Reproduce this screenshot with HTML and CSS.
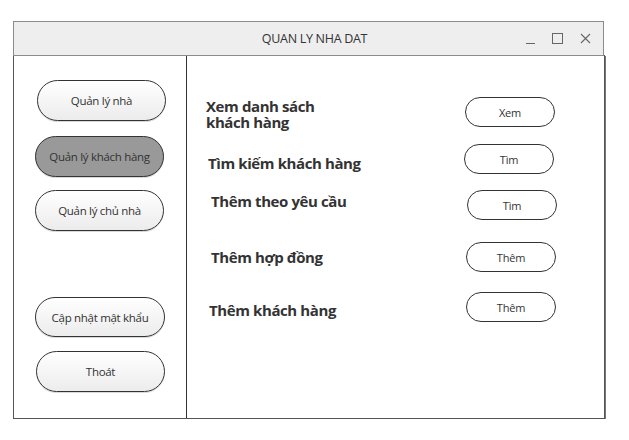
FILE: index.html
```html
<!DOCTYPE html>
<html>
<head>
<meta charset="utf-8">
<link rel="stylesheet" href="styles.css">
</head>
<body>
<div class="window">
  <div class="titlebar">
    <div class="title">QUAN LY NHA DAT</div>
    <div class="controls">
      <span class="ctl ctl-min"></span>
      <span class="ctl ctl-max"></span>
      <svg class="ctl-close" width="11" height="11" viewBox="0 0 11 11"><path d="M1 1L10 10M10 1L1 10" stroke="#666" stroke-width="1.1" fill="none"/></svg>
    </div>
  </div>
  <div class="body">
    <div class="sidebar">
      <div class="nav nav-1">Quản lý nhà</div>
      <div class="nav nav-2 active">Quản lý khách hàng</div>
      <div class="nav nav-3">Quản lý chủ nhà</div>
      <div class="nav nav-4">Cập nhật mật khẩu</div>
      <div class="nav nav-5">Thoát</div>
    </div>
    <div class="main">
      <div class="row row-1">
        <div class="label">Xem danh sách<br>khách hàng</div>
        <div class="btn">Xem</div>
      </div>
      <div class="row row-2">
        <div class="label">Tìm kiếm khách hàng</div>
        <div class="btn">Tìm</div>
      </div>
      <div class="row row-3">
        <div class="label">Thêm theo yêu cầu</div>
        <div class="btn">Tìm</div>
      </div>
      <div class="row row-4">
        <div class="label">Thêm hợp đồng</div>
        <div class="btn">Thêm</div>
      </div>
      <div class="row row-5">
        <div class="label">Thêm khách hàng</div>
        <div class="btn">Thêm</div>
      </div>
    </div>
  </div>
</div>
</body>
</html>
```
FILE: styles.css
```css
* { box-sizing: border-box; }
html, body { margin: 0; padding: 0; background: #fff; }
body {
  font-family: "Open Sans", "Noto Sans", sans-serif;
  color: #333;
  padding: 21px 0 0 13px;
}
.window { width: 592px; }
.titlebar {
  width: 591px;
  height: 35px;
  background: #eeeeee;
  border: 1px solid #8c8c8c;
  display: flex;
  align-items: center;
  position: relative;
}
.title {
  flex: 1;
  text-align: center;
  font-size: 12.5px;
  letter-spacing: -0.3px;
  padding-left: 12px;
  color: #333;
}
.controls {
  position: absolute;
  right: 12px;
  top: 0;
  height: 33px;
  display: flex;
  align-items: center;
  gap: 17px;
}
.ctl-min { width: 9px; height: 8px; border-bottom: 1px solid #666; display: block; margin-top: 2px; }
.ctl-max { width: 11px; height: 11px; border: 1px solid #666; display: block; }
.ctl-close { display: block; }
.body {
  height: 364px;
  margin-top: -1px;
  border: 1px solid #555;
  box-shadow: 1px 1px 0 #777;
  display: flex;
}
.sidebar {
  width: 173px;
  border-right: 1px solid #333;
  padding: 24px 0 0 21px;
  display: flex;
  flex-direction: column;
}
.nav {
  width: 129px;
  height: 41px;
  border: 1px solid #333;
  border-radius: 21px;
  background: linear-gradient(#ffffff, #ececec);
  display: flex;
  align-items: center;
  justify-content: center;
  font-size: 11.5px;
  letter-spacing: -0.3px;
  color: #333;
  box-shadow: 0 1px 0 rgba(0,0,0,0.15);
}
.nav.active { background: #999999; }
.nav-1 { margin-left: 2px; }
.nav-2 { margin-top: 15px; }
.nav-3 { margin-top: 13px; }
.nav-4 { margin-top: 66px; width: 130px; height: 40px; }
.nav-5 { margin-top: 14px; margin-left: 1px; }
.main {
  flex: 1;
  padding: 41px 0 0 19px;
}
.row {
  display: flex;
  align-items: flex-start;
  height: 30px;
}
.label {
  width: 259px;
  font-size: 15px;
  font-weight: bold;
  line-height: 16px;
  letter-spacing: -0.4px;
  color: #333;
}
.btn {
  width: 90px;
  height: 30px;
  border: 1px solid #333;
  border-radius: 15px;
  background: #fff;
  display: flex;
  align-items: center;
  justify-content: center;
  font-size: 11px;
  letter-spacing: -0.2px;
  color: #333;
}
.row-1 .label { padding-top: 1px; }
.row-2 { margin-top: 17px; }
.row-2 .label { padding-top: 11px; padding-left: 2px; width: 258px; }
.row-3 { margin-top: 16px; }
.row-3 .label { padding-top: 3px; padding-left: 5px; width: 261px; }
.row-4 { margin-top: 22px; }
.row-4 .label { padding-top: 7px; padding-left: 5px; width: 260px; }
.row-5 { margin-top: 20px; }
.row-5 .label { padding-top: 10px; padding-left: 3px; width: 260px; }
```
